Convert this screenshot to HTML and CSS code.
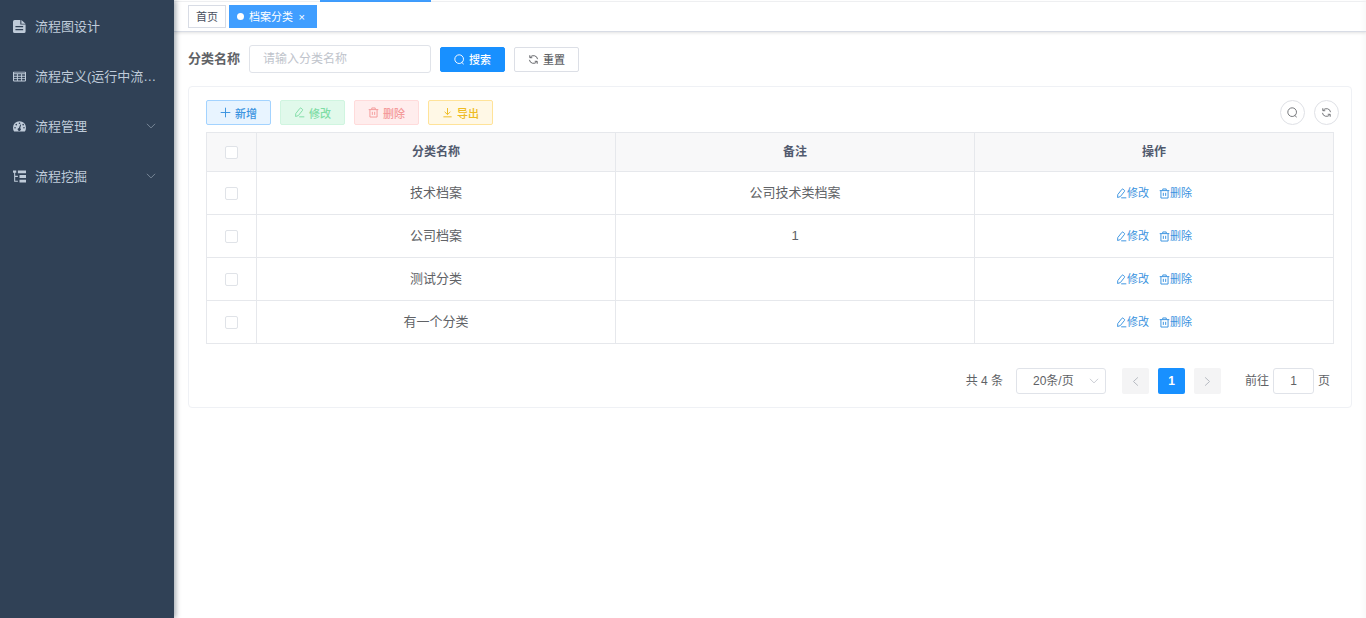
FILE: index.html
```html
<!DOCTYPE html>
<html lang="zh-CN">
<head>
<meta charset="utf-8">
<title>档案分类</title>
<link rel="stylesheet" href="styles.css">
</head>
<body>
<svg class="sprite" aria-hidden="true">
  <symbol id="search" viewBox="0 0 16 16"><path d="M7.500 1.200a6.300 6.300 0 1 1 0 12.600 6.300 6.300 0 0 1 0-12.600zM11.200 12.200l2.900 2.600"/></symbol>
  <symbol id="refresh" viewBox="0 0 16 16"><path d="M3 5.200A5.900 5.900 0 0 1 13.900 7.500M13 10.800A5.900 5.900 0 0 1 2.100 8.500M2.600 1.800v3.600h3.600M13.400 14.200v-3.600H9.800"/></symbol>
  <symbol id="plus" viewBox="0 0 16 16"><path d="M8 1v14M1 8h14"/></symbol>
  <symbol id="edit" viewBox="0 0 16 16"><path d="M2.600 9.500L8.500 2q.8-1 1.800-.2l1.800 1.400q1 .8.2 1.800L6.300 12.500l-4 1.300zM7.500 14.300h7.500"/></symbol>
  <symbol id="trash" viewBox="0 0 16 16"><path d="M1 3.800h14M5.500 3.500V1.400h5v2.100M2.800 4v10.600h10.400V4M6.300 7v4.500M9.700 7v4.500"/></symbol>
  <symbol id="download" viewBox="0 0 16 16"><path d="M8 1.500v9.500M3.800 7L8 11l4.200-4M2 14.300h12"/></symbol>
  <symbol id="down" viewBox="0 0 16 16"><path d="M1.500 4.500L8 11l6.500-6.500"/></symbol>
  <symbol id="left" viewBox="0 0 16 16"><path d="M11.500 2L5 8l6.500 6"/></symbol>
  <symbol id="right" viewBox="0 0 16 16"><path d="M4.500 2L11 8l-6.500 6"/></symbol>
</svg>
<div class="app">
  <nav class="sidebar">
    <a class="menu-item" href="#">
      <svg class="menu-icon" viewBox="0 0 16 16"><path fill-rule="evenodd" d="M2 0h7v5.500h6.500V14q0 2-2 2H2q-2 0-2-2V2q0-2 2-2zM10.300 0l5.200 4.500h-5.200zM3 7.500V9h9.500V7.500zM3 11v1.500h9.500V11z"/></svg>
      <span class="menu-text">流程图设计</span>
    </a>
    <a class="menu-item" href="#">
      <svg class="menu-icon" viewBox="0 0 16 16"><path fill-rule="evenodd" d="M1 2h14q1 0 1 1v10q0 1-1 1H1q-1 0-1-1V3q0-1 1-1zM1.300 5.200v2h3.500v-2zM6 5.200v2h4v-2zM11.200 5.200v2h3.500v-2zM1.300 8.300v1.700h3.500V8.300zM6 8.300v1.700h4V8.300zM11.200 8.300v1.700h3.500V8.300zM1.300 11.200v1.600h3.500v-1.600zM6 11.200v1.600h4v-1.600zM11.200 11.200v1.600h3.500v-1.600zM1.300 3.200v.8h13.400v-.8z"/></svg>
      <span class="menu-text">流程定义(运行中流…</span>
    </a>
    <a class="menu-item" href="#">
      <svg class="menu-icon" viewBox="0 0 16 16"><path fill-rule="evenodd" d="M8 1.500a8 8 0 0 1 8 8q0 2.700-1.400 4.800H1.400Q0 12.200 0 9.500a8 8 0 0 1 8-8zM8 3a1 1 0 1 0 0 2 1 1 0 0 0 0-2zM4 4.700a1 1 0 1 0 0 2 1 1 0 0 0 0-2zM12.500 4.700a1 1 0 1 0 0 2 1 1 0 0 0 0-2zM2.500 8.500a1 1 0 1 0 0 2 1 1 0 0 0 0-2zM13.500 8.500a1 1 0 1 0 0 2 1 1 0 0 0 0-2zM8.900 5.500L7.300 9.700a1.900 1.900 0 1 0 1.500.3L10 5.900z"/></svg>
      <span class="menu-text">流程管理</span>
      <svg class="icon menu-arrow"><use href="#down"/></svg>
    </a>
    <a class="menu-item" href="#">
      <svg class="menu-icon" viewBox="0 0 16 16"><path d="M0 .5h4v3H2.700v3.700H6v1.300H2.700v4.700H6v1.300H1.400v-11H0zM6 .5h10v3.400H6zM8 6.300h8v3.400H8zM8 12.100h8v3.400H8z"/></svg>
      <span class="menu-text">流程挖掘</span>
      <svg class="icon menu-arrow"><use href="#down"/></svg>
    </a>
  </nav>
  <div class="main">
    <div class="navbar"><span class="navbar-active"></span></div>
    <div class="tabs">
      <a class="tab" href="#">首页</a>
      <a class="tab tab-active" href="#"><span class="dot"></span>档案分类<span class="close">×</span></a>
    </div>
    <main class="content">
      <form class="filter">
        <label class="filter-label" for="name">分类名称</label>
        <input class="filter-input" id="name" type="text" placeholder="请输入分类名称">
        <button class="btn btn-solid" type="button"><svg class="icon"><use href="#search"/></svg>搜索</button>
        <button class="btn" type="button"><svg class="icon"><use href="#refresh"/></svg>重置</button>
      </form>
      <section class="card">
        <div class="toolbar">
          <button class="btn btn-add" type="button"><svg class="icon"><use href="#plus"/></svg>新增</button>
          <button class="btn btn-edit" type="button" disabled><svg class="icon"><use href="#edit"/></svg>修改</button>
          <button class="btn btn-delete" type="button" disabled><svg class="icon"><use href="#trash"/></svg>删除</button>
          <button class="btn btn-export" type="button"><svg class="icon"><use href="#download"/></svg>导出</button>
          <div class="tools">
            <button class="round" type="button" aria-label="搜索"><svg class="icon"><use href="#search"/></svg></button>
            <button class="round" type="button" aria-label="刷新"><svg class="icon"><use href="#refresh"/></svg></button>
          </div>
        </div>
        <table class="table">
          <thead>
            <tr><th class="col-check"><input class="check" type="checkbox" aria-label="全选"></th><th>分类名称</th><th>备注</th><th>操作</th></tr>
          </thead>
          <tbody>
            <tr><td><input class="check" type="checkbox" aria-label="技术档案"></td><td>技术档案</td><td>公司技术类档案</td><td><div class="actions"><a class="action" href="#"><svg class="icon"><use href="#edit"/></svg>修改</a><a class="action" href="#"><svg class="icon"><use href="#trash"/></svg>删除</a></div></td></tr>
            <tr><td><input class="check" type="checkbox" aria-label="公司档案"></td><td>公司档案</td><td>1</td><td><div class="actions"><a class="action" href="#"><svg class="icon"><use href="#edit"/></svg>修改</a><a class="action" href="#"><svg class="icon"><use href="#trash"/></svg>删除</a></div></td></tr>
            <tr><td><input class="check" type="checkbox" aria-label="测试分类"></td><td>测试分类</td><td></td><td><div class="actions"><a class="action" href="#"><svg class="icon"><use href="#edit"/></svg>修改</a><a class="action" href="#"><svg class="icon"><use href="#trash"/></svg>删除</a></div></td></tr>
            <tr><td><input class="check" type="checkbox" aria-label="有一个分类"></td><td>有一个分类</td><td></td><td><div class="actions"><a class="action" href="#"><svg class="icon"><use href="#edit"/></svg>修改</a><a class="action" href="#"><svg class="icon"><use href="#trash"/></svg>删除</a></div></td></tr>
          </tbody>
        </table>
        <div class="pagination">
          <span class="total">共 4 条</span>
          <div class="size">
            <select class="size-select" aria-label="每页条数"><option>20条/页</option></select>
            <svg class="icon size-arrow"><use href="#down"/></svg>
          </div>
          <div class="pages">
            <button class="page" type="button" aria-label="上一页" disabled><svg class="icon"><use href="#left"/></svg></button>
            <button class="page page-current" type="button">1</button>
            <button class="page" type="button" aria-label="下一页" disabled><svg class="icon"><use href="#right"/></svg></button>
          </div>
          <label class="jump">前往<input class="jump-input" type="text" value="1">页</label>
        </div>
      </section>
    </main>
  </div>
</div>
</body>
</html>
```

FILE: styles.css
```css
* {
  box-sizing: border-box;
}

body {
  margin: 0;
  background: #fff;
  color: #606266;
  font: 13px/20px "Liberation Sans", "Noto Sans CJK SC", sans-serif;
}

a {
  text-decoration: none;
}

button,
input,
select {
  font-family: inherit;
}

.sprite {
  position: absolute;
  width: 0;
  height: 0;
}

.icon {
  flex: none;
  width: 11px;
  height: 11px;
  fill: none;
  stroke: currentColor;
  stroke-width: 1.4;
}

.app {
  display: flex;
  min-height: 100vh;
}

.sidebar {
  z-index: 1;
  flex: none;
  width: 174px;
  padding-top: 1px;
  background: #304156;
  box-shadow: 2px 0 5px rgba(0, 21, 41, 0.35);
}

.menu-item {
  display: flex;
  align-items: center;
  gap: 9px;
  height: 50px;
  padding: 0 18px 0 13px;
  color: #bfcbd9;
}

.menu-icon {
  flex: none;
  width: 13px;
  height: 13px;
  fill: currentColor;
}

.menu-text {
  flex: 1;
  padding-top: 1px;
  white-space: nowrap;
}

.menu-arrow {
  width: 10px;
  height: 10px;
  color: #8592a2;
}

.main {
  flex: 1;
  min-width: 0;
  box-shadow: inset -8px 0 6px -6px rgba(0, 0, 0, 0.04);
}

.navbar {
  height: 2px;
  padding-left: 146px;
  border-bottom: 1px solid #f3f4f6;
}

.navbar-active {
  display: block;
  width: 111px;
  height: 2px;
  background: #409eff;
}

.tabs {
  display: flex;
  gap: 3px;
  height: 30px;
  padding: 3px 14px;
  border-bottom: 1px solid #d8dce5;
  box-shadow: 0 1px 3px rgba(0, 0, 0, 0.12);
}

.tab {
  display: flex;
  align-items: center;
  height: 23px;
  padding: 0 7px;
  border: 1px solid #d8dce5;
  color: #495060;
  font-size: 11px;
}

.tab-active {
  border-color: #409eff;
  background: #409eff;
  color: #fff;
}

.dot {
  width: 7px;
  height: 7px;
  margin-right: 5px;
  border-radius: 50%;
  background: #fff;
}

.close {
  width: 12px;
  margin-right: 4px;
  text-align: right;
}

.content {
  padding: 13px 14px;
}

.filter {
  display: flex;
  align-items: center;
  gap: 9px;
}

.filter-label {
  font-weight: 700;
}

.filter-input {
  width: 182px;
  height: 28px;
  padding: 0 13px;
  border: 1px solid #e0e3e9;
  border-radius: 3px;
  background: #fff;
  color: #606266;
  font-size: 12px;
}

.filter-input::placeholder {
  color: #c0c4cc;
}

.btn {
  display: flex;
  align-items: center;
  justify-content: center;
  gap: 4px;
  width: 65px;
  height: 25px;
  padding: 0;
  border: 1px solid #dcdfe6;
  border-radius: 2px;
  background: #fff;
  color: #606266;
  font-size: 11px;
  font-weight: 500;
}

.btn-solid {
  border-color: #1890ff;
  background: #1890ff;
  color: #fff;
}

.btn-add {
  border-color: #a3d3ff;
  background: #e8f4ff;
  color: #3a93e0;
}

.btn-edit {
  border-color: #d0f5e0;
  background: #e1f9eb;
  color: #7fdda5;
}

.btn-delete {
  border-color: #ffdbdb;
  background: #ffeded;
  color: #f49a9a;
}

.btn-export {
  border-color: #ffe399;
  background: #fff8e6;
  color: #eebb22;
}

.card {
  margin-top: 13px;
  padding: 13px 17px;
  border: 1px solid #eff1f5;
  border-radius: 4px;
}

.toolbar {
  display: flex;
  gap: 9px;
}

.tools {
  display: flex;
  gap: 9px;
  margin-right: -5px;
  margin-left: auto;
}

.round {
  display: flex;
  align-items: center;
  justify-content: center;
  width: 25px;
  height: 25px;
  padding: 0;
  border: 1px solid #dfe1e6;
  border-radius: 50%;
  background: #fff;
  color: #707277;
}

.table {
  width: 100%;
  margin-top: 7px;
  border-collapse: collapse;
  table-layout: fixed;
}

.table th,
.table td {
  height: 43px;
  padding: 0;
  border: 1px solid #e6e8ec;
  text-align: center;
}

.table th {
  height: 39px;
  background: #f8f8f9;
  color: #515a6e;
  font-size: 12px;
}

.table .col-check {
  width: 50px;
}

.check {
  display: block;
  width: 13px;
  height: 13px;
  margin: 0 auto;
  border: 1px solid #e0e3e8;
  border-radius: 2px;
  background: #fff;
  appearance: none;
}

.actions {
  display: flex;
  justify-content: center;
  gap: 10px;
}

.action {
  display: flex;
  align-items: center;
  color: #3a93e0;
  font-size: 11px;
}

.pagination {
  display: flex;
  align-items: center;
  justify-content: flex-end;
  margin-top: 24px;
  padding-right: 4px;
  font-size: 12px;
}

.size {
  position: relative;
  margin-left: 13px;
}

.size-select {
  display: block;
  width: 90px;
  height: 26px;
  padding: 0 16px;
  border: 1px solid #e0e3e9;
  border-radius: 3px;
  background: #fff;
  color: #606266;
  font-size: 12px;
  appearance: none;
}

.size-arrow {
  position: absolute;
  top: 8px;
  right: 7px;
  width: 10px;
  height: 10px;
  color: #c0c4cc;
}

.pages {
  display: flex;
  gap: 9px;
  margin-left: 16px;
}

.page {
  display: flex;
  align-items: center;
  justify-content: center;
  width: 27px;
  height: 26px;
  padding: 0;
  border: 0;
  border-radius: 2px;
  background: #f4f4f5;
  color: #b4b8c0;
  font-size: 12px;
}

.page-current {
  background: #1890ff;
  color: #fff;
  font-weight: 700;
}

.jump {
  display: flex;
  align-items: center;
  gap: 4px;
  margin-left: 24px;
}

.jump-input {
  width: 41px;
  height: 26px;
  padding: 0;
  border: 1px solid #e0e3e9;
  border-radius: 3px;
  background: #fff;
  color: #606266;
  font-size: 12px;
  text-align: center;
}
```
